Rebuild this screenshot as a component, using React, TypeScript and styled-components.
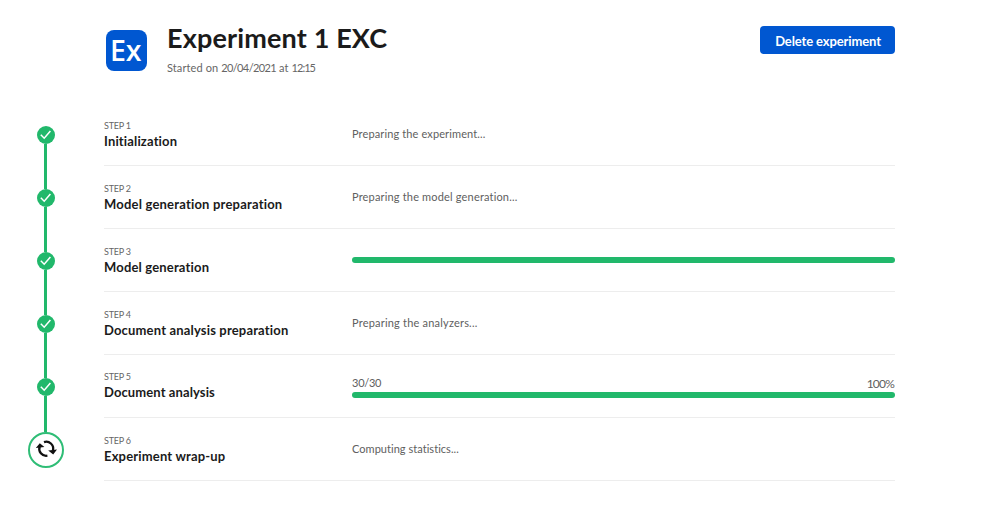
import React from "react";
import styled, { createGlobalStyle } from "styled-components";

const GlobalStyle = createGlobalStyle`
  *, *::before, *::after { box-sizing: border-box; }
  body {
    margin: 0;
    background: #fff;
    color: #1b1b1b;
    font-family: Lato, "Open Sans", sans-serif;
    font-variant-ligatures: none;
  }
  h1, h2, p { margin: 0; }
`;

const Page = styled.main`
  width: 895px;
  padding-left: 28px;
`;

const Header = styled.header`
  display: flex;
  align-items: flex-start;
  height: 103px;
  padding: 22px 0 0 78px;
`;

const Logo = styled.div`
  flex: none;
  width: 41px;
  height: 41px;
  margin: 8px 20px 0 0;
  padding-left: 4px;
  border-radius: 8px;
  background: #0057d1;
  color: #fff;
  font: 600 28.5px/41px "Open Sans", sans-serif;
  letter-spacing: -0.1px;
`;

const Heading = styled.div`
  flex: 1;
`;

const Title = styled.h1`
  font-size: 27px;
  line-height: 31px;
  font-weight: 700;
  letter-spacing: 0.15px;
  white-space: nowrap;
`;

const Started = styled.p`
  margin-top: 8px;
  font-size: 11px;
  line-height: 14px;
  letter-spacing: 0.1px;
  color: #666;
`;

const Digits = styled.span<{ $tracking: number }>`
  letter-spacing: ${(p) => p.$tracking}px;
`;

const DeleteButton = styled.button`
  width: 135px;
  height: 28px;
  margin-top: 4px;
  padding: 1px 0 0 1px;
  border: 0;
  border-radius: 4px;
  background: #0057d1;
  color: #fff;
  font: 700 13px/20px Lato, sans-serif;
  letter-spacing: -0.12px;
  white-space: nowrap;
`;

const Row = styled.section`
  display: grid;
  grid-template-columns: 36px 791px;
  column-gap: 40px;
  height: 63px;
`;

const Rail = styled.div`
  display: flex;
  flex-direction: column;
  align-items: center;
`;

const Connector = styled.span<{ $height: number; $visible: boolean }>`
  flex: none;
  width: 3px;
  height: ${(p) => p.$height}px;
  margin-right: 1px;
  background: ${(p) => (p.$visible ? "#21b86b" : "transparent")};
`;

const NodeIcon = styled.svg`
  flex: none;
  display: block;
`;

const Content = styled.div`
  display: grid;
  grid-template-columns: 248px 543px;
  border-bottom: 1px solid #ededed;
`;

const Labels = styled.div<{ $raised?: boolean }>`
  padding-top: ${(p) => (p.$raised ? 15 : 16)}px;
`;

const StepNumber = styled.p`
  font-size: 9px;
  line-height: 14px;
  letter-spacing: -0.2px;
  color: #666;
`;

const StepTitle = styled.h2<{ $tracking: number }>`
  font-size: 13px;
  line-height: 16px;
  font-weight: 700;
  letter-spacing: ${(p) => p.$tracking}px;
  white-space: nowrap;
`;

const Message = styled.p<{ $tracking: number }>`
  padding-top: 24px;
  font-size: 11px;
  line-height: 14px;
  letter-spacing: ${(p) => p.$tracking}px;
  color: #606060;
`;

const Progress = styled.div<{ $top: number }>`
  padding-top: ${(p) => p.$top}px;
`;

const Counts = styled.div`
  display: flex;
  justify-content: space-between;
  height: 16px;
  font-size: 11px;
  line-height: 14px;
  letter-spacing: -0.25px;
  color: #606060;
`;

const Percent = styled.span`
  padding: 1px 1px 0 0;
  font-size: 12px;
  letter-spacing: -0.8px;
`;

const Bar = styled.div`
  height: 6px;
  border-radius: 3px;
  background: #21b86b;
`;

type Step = {
  title: string;
  tracking: number;
  message?: string;
  messageTracking?: number;
  counts?: [string, string];
  running?: boolean;
};

const steps: Step[] = [
  { title: "Initialization", tracking: 0.15, message: "Preparing the experiment..." },
  {
    title: "Model generation preparation",
    tracking: 0.2,
    message: "Preparing the model generation...",
    messageTracking: 0.17,
  },
  { title: "Model generation", tracking: 0.17 },
  {
    title: "Document analysis preparation",
    tracking: 0.17,
    message: "Preparing the analyzers...",
    messageTracking: 0.2,
  },
  { title: "Document analysis", tracking: 0.1, counts: ["30/30", "100%"] },
  {
    title: "Experiment wrap-up",
    tracking: 0.17,
    message: "Computing statistics...",
    messageTracking: 0.04,
    running: true,
  },
];

const DoneNode = () => (
  <NodeIcon width="18" height="18" viewBox="0 0 18 18">
    <circle cx="9" cy="9" r="9" fill="#21b86b" />
    <path d="M3.8 8.8 7.2 12.2 13.4 4.9" fill="none" stroke="#fff" strokeWidth="1.5" />
  </NodeIcon>
);

const RunningNode = () => (
  <NodeIcon width="36" height="36" viewBox="0 0 36 36">
    <circle cx="18" cy="18" r="17" fill="#fff" stroke="#2fbd76" strokeWidth="2" />
    <g fill="none" stroke="#111" strokeWidth="2.3">
      <path d="M11.7 14.5A6.9 6.9 0 0 0 19.4 23.7" />
      <path d="M16 10.1A6.9 6.9 0 0 1 25 18.2" />
    </g>
    <path d="M7.8 16 11.8 11.2 16.4 15ZM20.2 18.6 29 17.6 25.2 22.4Z" fill="#111" />
  </NodeIcon>
);

export default function App() {
  return (
    <>
      <GlobalStyle />
      <Page>
        <Header>
          <Logo>Ex</Logo>
          <Heading>
            <Title>Experiment 1 EXC</Title>
            <Started>
              Started on <Digits $tracking={-0.6}>20/04/2021</Digits> at{" "}
              <Digits $tracking={-0.95}>12:15</Digits>
            </Started>
          </Heading>
          <DeleteButton>Delete experiment</DeleteButton>
        </Header>
        {steps.map((step, i) => (
          <Row key={step.title}>
            <Rail>
              <Connector $height={step.running ? 14 : 23} $visible={i > 0} />
              {step.running ? <RunningNode /> : <DoneNode />}
              {!step.running && <Connector $height={22} $visible />}
            </Rail>
            <Content>
              <Labels $raised={!!step.counts}>
                <StepNumber>STEP {i + 1}</StepNumber>
                <StepTitle $tracking={step.tracking}>{step.title}</StepTitle>
              </Labels>
              {step.message ? (
                <Message $tracking={step.messageTracking ?? 0.12}>{step.message}</Message>
              ) : (
                <Progress $top={step.counts ? 21 : 28}>
                  {step.counts && (
                    <Counts>
                      <span>{step.counts[0]}</span>
                      <Percent>{step.counts[1]}</Percent>
                    </Counts>
                  )}
                  <Bar />
                </Progress>
              )}
            </Content>
          </Row>
        ))}
      </Page>
    </>
  );
}
